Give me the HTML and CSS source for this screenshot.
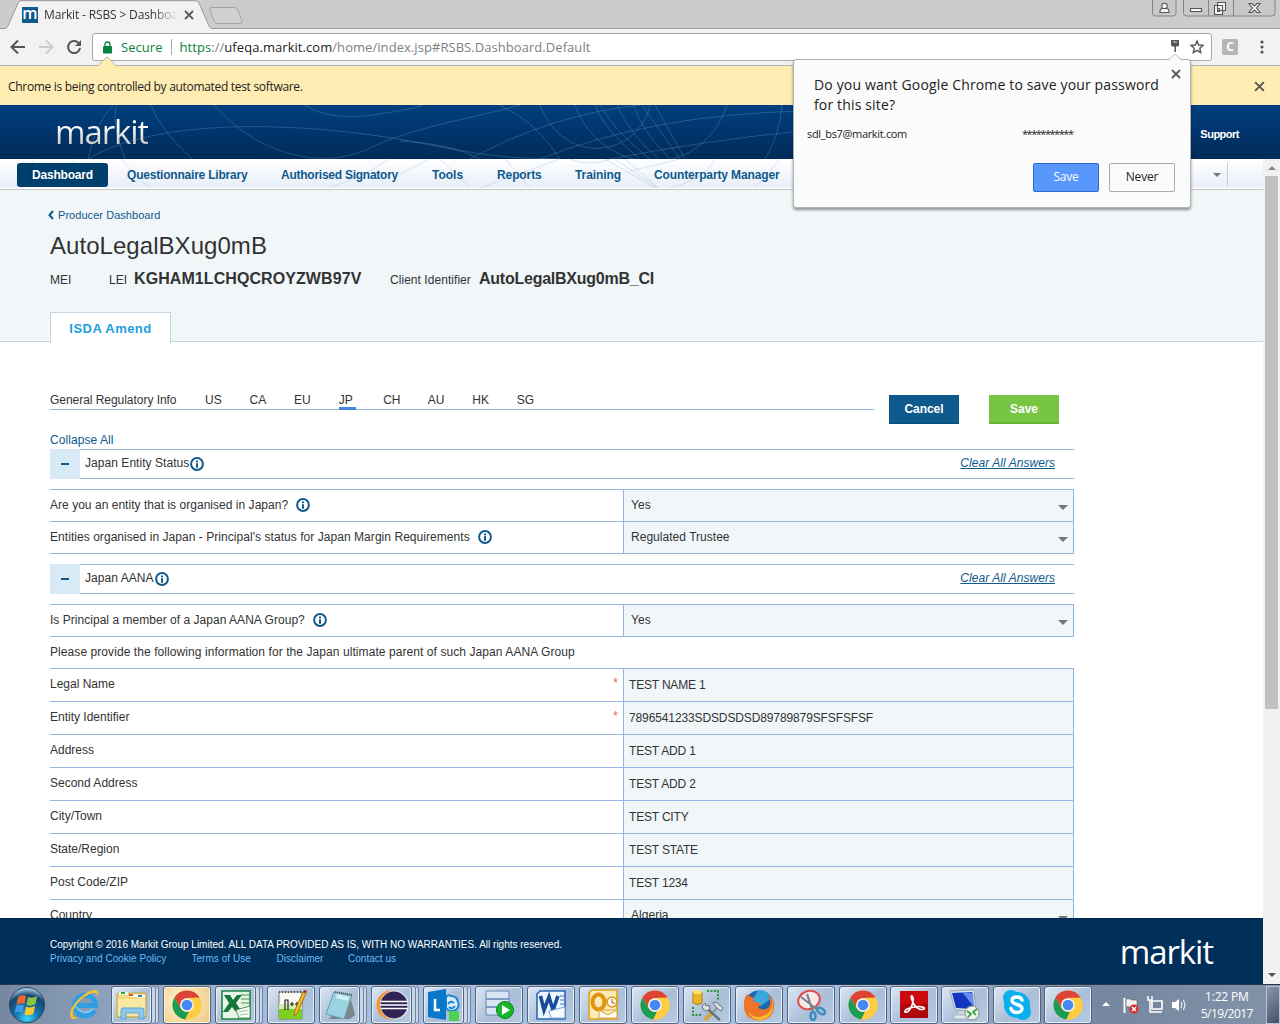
FILE: index.html
```html
<!DOCTYPE html>
<html lang="en">
<head>
<meta charset="utf-8">
<title>Markit - RSBS &gt; Dashboard</title>
<link rel="stylesheet" href="styles.css">
</head>
<body>
<svg class="defs" width="0" height="0">
  <symbol id="info" viewBox="0 0 14 14"><circle cx="7" cy="7" r="5.9" fill="none" stroke="#0f5a8c" stroke-width="2"/><path d="M6 3.4h2v1.8H6zM6 6.2h2v4.6H6z" fill="#0f5a8c"/></symbol>
  <symbol id="close" viewBox="0 0 10 10"><path d="M1 1l8 8M9 1l-8 8" stroke="#5a5a5a" stroke-width="1.800" fill="none"/></symbol>
  <symbol id="chrome" viewBox="0 0 30 30"><circle cx="15" cy="15" r="14.5" fill="#fcc934"/><path d="M2.4 7.7A14.5 14.5 0 0 1 27.6 7.8L15 8.2a6.8 6.8 0 0 0-6 10z" fill="#dc4437"/><path d="M2.4 7.7L8.9 18.4c1.5 2.7 4.5 4 8 3.2L13.2 29.4A14.5 14.5 0 0 1 2.4 7.7z" fill="#1a9b58"/><path d="M27.6 7.8H15a7 7 0 0 1 5.8 10.8L13.5 29.4A14.5 14.5 0 0 0 27.6 7.8z" fill="#ffcd40"/><circle cx="15" cy="15" r="6.8" fill="#f5f5f5"/><circle cx="15" cy="15" r="5.3" fill="#4587f3"/></symbol>
</svg>
<div class="screen">
  <div class="tabstrip">
    <svg class="tabshape" width="250" height="29" viewBox="0 0 250 29"><path d="M0 28.5H5Q7 28 8 26L18 3Q19 .7 21 .7H195Q198 .7 199 3L209 26Q210 28.500 213 28.500H250V29H0z" fill="#f2f2f2"/><path d="M0 28.500H5Q7 28 8 26L18 3Q19 .7 21 .7H195Q198 .7 199 3L209 26Q210 28.500 213 28.500H250" fill="none" stroke="#999"/><path d="M212 7.500H234Q237 7.500 238 10L242 21Q243 23.500 240 23.500H218Q215 23.500 214 21L210 10Q209 7.500 212 7.500z" fill="#d1d1d1" stroke="#a3a3a3"/></svg>
    <div class="tabinfo">
      <span class="favicon">m</span><span class="tabtitle">Markit - RSBS &gt; Dashboa</span><svg class="tabclose" width="10" height="10"><use href="#close"/></svg>
    </div>
    <div class="winctl">
      <svg width="128" height="18" viewBox="0 0 128 18"><g fill="#c8c8c8" stroke="#858585"><path d="M2.500-1V13q0 3 3 3H23q3 0 3-3V-1M33.500-1V13q0 3 3 3H122q3 0 3-3V-1M58.500 0V16M83.500 0V16"/></g><g fill="#f7f7f7" stroke="#555" stroke-width="1.100"><circle cx="14.500" cy="6" r="2.800"/><path d="M10 12.500V11q0-2.500 3-2.500h3q3 0 3 2.500v1.500zM40.500 8.500h11v3h-11zM67.500 2.500h8v8h-8zM64.500 5.500h8v9h-8zM67.500 8.500h2v3h-2zM99 3.500h3l2.500 2.500 2.500-2.500h3L106.500 8l3.500 4.500h-3L104.500 10 102 12.500h-3L102.500 8z"/></g></svg>
    </div>
  </div>
  <div class="toolbar">
    <svg class="navicons" width="84" height="20" viewBox="0 0 84 20" fill="none" stroke-width="2"><path d="M25 10H12M18 3.500L11.500 10l6.500 6.500" stroke="#555"/><path d="M39 10H52M46 3.500l6.500 6.500-6.500 6.500" stroke="#ccc"/><path d="M78.500 6A6 6 0 1 0 80 11" stroke="#555"/><path d="M81 3v6h-6z" fill="#555"/></svg>
    <div class="omnibox">
      <svg width="9" height="13" viewBox="0 0 9 13"><path d="M2 6V3.500a2.500 2.500 0 0 1 5 0V6" fill="none" stroke="#0b8043" stroke-width="1.300"/><rect y="5" width="9" height="7.500" rx="1" fill="#0b8043"/></svg>
      <span class="secure">Secure</span><span class="bar"></span>
      <span class="url"><span class="green">https</span>://<b>ufeqa.markit.com</b>/home/index.jsp#RSBS.Dashboard.Default</span>
      <svg class="omni-right" width="36" height="16" viewBox="0 0 36 16"><path d="M1 1h8v5q0 1.500-2 1.500H6V13H4.500V7.500H3Q1 7.500 1 6z" fill="#555"/><path d="M3 3h4" stroke="#ddd"/><path d="M27 2l1.700 4 4.300.4-3.200 2.900.9 4.200-3.700-2.200-3.700 2.200.9-4.200L21 6.400l4.300-.4z" fill="none" stroke="#555" stroke-width="1.400"/></svg>
    </div>
    <span class="ext">C</span>
    <svg class="dots" width="4" height="16" viewBox="0 0 4 16" fill="#555"><circle cx="2" cy="3" r="1.600"/><circle cx="2" cy="8" r="1.600"/><circle cx="2" cy="13" r="1.600"/></svg>
  </div>
  <div class="infobar"><svg class="notch" width="20" height="11" viewBox="0 0 20 11"><path d="M0 10.500L10 .7l10 9.800" fill="#ffecb3" stroke="#bbb6a5"/></svg><span class="auto">Chrome is being controlled by automated test software.</span><svg width="11" height="11"><use href="#close"/></svg></div>

  <div class="viewport">
    <div class="page">
      <div class="masthead">
        <svg class="arcs" width="1263" height="54" viewBox="0 0 1263 54" fill="none" stroke="#6f9fd0" stroke-opacity=".32"><path d="M113 0Q96 18 88 54M116 0Q112 22 125 54M151 0Q160 25 192 54M214 0C260 52 325 65 370 43S480 12 520 0M88 54C170 5 340 22 420 38S520 53 560 54M305 0Q330 17 380 9T420 0M499 0Q535 15 560 54M540 0C565 65 640 50 650 0M575 0C600 70 700 80 727 0M595 0Q604 25 640 54M600 0Q616 28 650 54M617 0Q630 30 659 54M633 0Q645 30 670 54M642 0L680 54M655 0L685 54M400 36Q450 38 480 54M470 54Q550 10 640 0M540 54Q650 10 800 6M610 54Q710 35 800 26M765 54Q780 30 782 0"/></svg>
        <span class="logo">markit</span><span class="support">Support</span>
      </div>
      <nav class="mainnav">
        <svg class="arcs" width="1263" height="29" viewBox="0 0 1263 29" fill="none" stroke="#9bb4d4" stroke-opacity=".35"><path d="M16 29Q25 12 35 0M72 0L78 8M122 0Q135 18 150 29M330 28Q360 20 389 0M400 15L430 0M440 0L470 29M505 0L530 29M480 29L560 0M570 0Q590 8 610 0M605 0L655 29M615 0L657 29M625 0L658 29M630 12L680 0M670 29Q705 20 715 0M755 29L780 0"/></svg>
        <span class="n on">Dashboard</span><span class="n n2">Questionnaire Library</span><span class="n n3">Authorised Signatory</span><span class="n n4">Tools</span><span class="n n5">Reports</span><span class="n n6">Training</span><span class="n n7">Counterparty Manager</span>
        <span class="more"><i class="tri"></i></span>
      </nav>
      <section class="entity">
        <div class="crumb"><svg width="6" height="10" viewBox="0 0 6 10"><path d="M5 1L1.500 5 5 9" fill="none" stroke="#0f5a8c" stroke-width="2"/></svg><span>Producer Dashboard</span></div>
        <h1><span>AutoLegalBXug0mB</span></h1>
        <div class="ids"><span class="mei">MEI</span><span class="lei">LEI</span><b class="leiv">KGHAM1LCHQCROYZWB97V</b><span class="ci">Client Identifier</span><b class="civ">AutoLegalBXug0mB_CI</b></div>
        <div class="tab"><span>ISDA Amend</span></div>
      </section>
      <main>
        <div class="actions">
          <div class="regions"><span class="gri">General Regulatory Info</span><span class="r">US</span><span class="r">CA</span><span class="r">EU</span><span class="r"><u>JP</u></span><span class="r">CH</span><span class="r">AU</span><span class="r">HK</span><span class="r">SG</span></div>
          <button class="cancel">Cancel</button><button class="save">Save</button>
        </div>
        <div class="collapse"><span>Collapse All</span></div>
        <div class="section"><span class="minus"></span><div class="bar2"><span class="t1">Japan Entity Status</span><svg width="14" height="14"><use href="#info"/></svg><a>Clear All Answers</a></div></div>
        <div class="grid">
          <div class="row"><div class="q"><span class="q1">Are you an entity that is organised in Japan?</span><svg width="14" height="14"><use href="#info"/></svg></div><div class="v sel"><span class="yes">Yes</span><i class="tri"></i></div></div>
          <div class="row"><div class="q"><span class="q2">Entities organised in Japan - Principal's status for Japan Margin Requirements</span><svg width="14" height="14"><use href="#info"/></svg></div><div class="v sel"><span class="rt">Regulated Trustee</span><i class="tri"></i></div></div>
        </div>
        <div class="section"><span class="minus"></span><div class="bar2"><span class="t2">Japan AANA</span><svg width="14" height="14"><use href="#info"/></svg><a>Clear All Answers</a></div></div>
        <div class="grid last">
          <div class="row"><div class="q"><span class="q3">Is Principal a member of a Japan AANA Group?</span><svg width="14" height="14"><use href="#info"/></svg></div><div class="v sel"><span class="yes">Yes</span><i class="tri"></i></div></div>
          <div class="row"><div class="q wide"><span class="q4">Please provide the following information for the Japan ultimate parent of such Japan AANA Group</span></div></div>
          <div class="row f"><div class="q"><span>Legal Name</span><em>*</em></div><div class="v"><span>TEST NAME 1</span></div></div>
          <div class="row f"><div class="q"><span>Entity Identifier</span><em>*</em></div><div class="v"><span class="idv">7896541233SDSDSDSD89789879SFSFSFSF</span></div></div>
          <div class="row f"><div class="q"><span>Address</span></div><div class="v"><span>TEST ADD 1</span></div></div>
          <div class="row f"><div class="q"><span>Second Address</span></div><div class="v"><span>TEST ADD 2</span></div></div>
          <div class="row f"><div class="q"><span>City/Town</span></div><div class="v"><span>TEST CITY</span></div></div>
          <div class="row f"><div class="q"><span>State/Region</span></div><div class="v"><span>TEST STATE</span></div></div>
          <div class="row f"><div class="q"><span>Post Code/ZIP</span></div><div class="v"><span>TEST 1234</span></div></div>
          <div class="row f"><div class="q"><span>Country</span></div><div class="v sel"><span>Algeria</span><i class="tri"></i></div></div>
        </div>
      </main>
      <footer>
        <div><p class="copy"><span>Copyright © 2016 Markit Group Limited. ALL DATA PROVIDED AS IS, WITH NO WARRANTIES. All rights reserved.</span></p>
        <p class="links"><span class="l1">Privacy and Cookie Policy</span><span class="l2">Terms of Use</span><span class="l3">Disclaimer</span><span class="l4">Contact us</span></p></div>
        <span class="logo">markit</span>
      </footer>
    </div>
    <div class="side"><div class="sidetop"></div><div class="scroll"><i class="up"></i><div class="thumb"></div><i class="down"></i></div></div>
  </div>

  <div class="taskbar">
    <svg class="orb" width="38" height="38" viewBox="0 0 38 38"><defs><radialGradient id="og" cx=".5" cy=".9" r=".85"><stop offset="0" stop-color="#35dcff"/><stop offset=".4" stop-color="#1671ac"/><stop offset=".8" stop-color="#164670"/><stop offset="1" stop-color="#9ac0da"/></radialGradient></defs><circle cx="19" cy="19" r="17.500" fill="url(#og)" stroke="#27455e"/><path d="M10 11q4-3 8-1l-1.500 8q-4-2-8 1z" fill="#ee6632"/><path d="M20 11q4 2 9-1l-1.500 8q-5 3-9 1z" fill="#8bc53f"/><path d="M8 20q4-2.500 8-.5L14.500 27q-4-2-8 0z" fill="#3d9ae2"/><path d="M18 20.500q4 2 9-.5l-1.500 7.500q-5 3-9 1z" fill="#fcc72c"/></svg>
    <svg class="ie" width="32" height="32" viewBox="0 0 32 32"><path d="M26.500 21A10.500 10.500 0 1 1 27.500 16.500H9" fill="none" stroke="#2f9fe2" stroke-width="5"/><path d="M25 20A10.500 10.500 0 0 1 8 17" fill="none" stroke="#7fd0f6" stroke-width="1.500"/><path d="M3 29C-2 22 14 2 27 1q5 1 2 7 1-5-4-4C15 6 3 19 5 27q2 3 6 1-5 4-8 1" fill="#f6c32c"/></svg>
    <div class="tasks">
      <div class="task st"><span><svg width="32" height="32" viewBox="0 0 32 32"><path d="M1 6q0-2 2-2h25q2 0 2 2v22H1z" fill="#f0d77c" stroke="#c3a146"/><path d="M3 3h9v3H3zM14 5h8v3h-8zM22 6h7v3h-7z" fill="#fffbe0"/><path d="M5 3h4v2H5z" fill="#1fae3c"/><path d="M13 5h4v2h-4z" fill="#d34f36"/><path d="M22 6h4v2h-4z" fill="#298ade"/><path d="M2 10h27v17H2z" fill="#f9e9a5"/><path d="M5 30V21q0-2 2-2h19q2 0 2 2v9h-5v-6H10v6z" fill="#8dc8e8" stroke="#5aa5d1"/></svg></span><s></s><s></s></div>
      <div class="task active"><span><svg width="30" height="30"><use href="#chrome"/></svg></span></div>
      <div class="task st"><span><svg width="32" height="32" viewBox="0 0 32 32"><path d="M2 2h28v28H2z" fill="#e8f4e5" stroke="#218442" stroke-width="1.600"/><path d="M21 6h8M21 10h8M21 14h8" stroke="#96c59b" stroke-width="2"/><path d="M4 6h6l3 5 4-5h5l-6 8 6 9h-6l-4-5-4 5H3l6-9z" fill="#16773a"/><path d="M16 21l14-4v12H19z" fill="#fafffa" stroke="#459550"/><path d="M19 23l9-2M20 26l8-1" stroke="#96c59b"/></svg></span><s></s><s></s></div>
      <div class="task"><span><svg width="32" height="32" viewBox="0 0 32 32"><path d="M4 3h23v27H4z" fill="#f8f9f2" stroke="#777"/><path d="M4 19h23v11H4z" fill="#7ed01f"/><path d="M4 15h23v5H4z" fill="#d3eeae"/><path d="M4 3h23" stroke="#555" stroke-width="2" stroke-dasharray="1 2"/><path d="M10 21V11h3v10M15 15h4M17 13v4M20 15h4M22 13v4" fill="none" stroke="#222" stroke-width="1.200"/><path d="M19 27l1-6L28 3l3 1-8 19z" fill="#f5b62b" stroke="#a77817"/><path d="M28 3l1-2 3 1-1 2z" fill="#b02727"/></svg></span></div>
      <div class="task st"><span><svg width="32" height="32" viewBox="0 0 32 32"><path d="M26 7l5 19-5 4H5z" fill="#7d878b"/><path d="M10 3l18 3-8 24L2 25z" fill="#9bd2df" stroke="#659daf"/><path d="M13 5l12 3-1 4-12-3z" fill="#d3f2f7"/><path d="M11 3l17 3" stroke="#4e5961" stroke-width="2" stroke-dasharray="1 1"/></svg></span><s></s><s></s></div>
      <div class="task st"><span><svg width="32" height="32" viewBox="0 0 32 32"><circle cx="15" cy="16" r="14.500" fill="#f6952c"/><circle cx="18.500" cy="16" r="14.500" fill="#dfe3ee"/><circle cx="18" cy="16" r="13.500" fill="#302457"/><path d="M5 12.500h27M4 16h28M5 19.500h27" stroke="#fff" stroke-width="1.600"/></svg></span><s></s><s></s></div>
      <div class="task st"><span><svg width="32" height="32" viewBox="0 0 32 32"><path d="M18 8q2-3 5-1 6 0 7 6 2 5-2 8-6 3-10-2z" fill="#d7e9f7" stroke="#1987d2" stroke-width="2"/><path d="M20 15q3-4 6-1M27 17q-3 4-6 1" fill="none" stroke="#1987d2" stroke-width="2"/><path d="M0 3l18-3v31L0 28z" fill="#0878cb"/><path d="M7 10v11h5" fill="none" stroke="#fff" stroke-width="2.500"/><path d="M21 22h10v10H21z" fill="#52d052"/></svg></span><s></s><s></s></div>
      <div class="task"><span><svg width="32" height="32" viewBox="0 0 32 32"><path d="M3 2h23v24H3z" fill="#d7e5f4" stroke="#6287b6"/><path d="M3 10h23M3 18h23" stroke="#6287b6" stroke-width="1.500"/><circle cx="22" cy="21" r="8.500" fill="#18b52a" stroke="#08851a"/><path d="M19 16v10l8-5z" fill="#fff"/></svg></span></div>
      <div class="task"><span><svg width="32" height="32" viewBox="0 0 32 32"><path d="M5 2h25v28H2V5z" fill="#edf4fd" stroke="#2d67b1" stroke-width="1.600"/><path d="M25 7h4M25 11h4M25 15h4" stroke="#93b3da" stroke-width="2"/><path d="M5.500 7l3.500 14 5-13 4 13L23 7" fill="none" stroke="#174b99" stroke-width="3.600"/><path d="M14 22l16-4v11H16z" fill="#f9fcff" stroke="#77a1d3"/></svg></span></div>
      <div class="task"><span><svg width="32" height="32" viewBox="0 0 32 32"><path d="M5 1h25v29H2V4z" fill="#fdeab4" stroke="#e3a21b" stroke-width="1.600"/><ellipse cx="11.500" cy="13" rx="6" ry="7.500" fill="none" stroke="#e19413" stroke-width="4"/><circle cx="25" cy="13" r="5" fill="#fff9e8" stroke="#d99a22" stroke-width="1.600"/><path d="M25 10v4h3" fill="none" stroke="#a76910"/><path d="M12 21h18v8H12zl9 5 9-5" fill="#fffdf7" stroke="#d6a540"/></svg></span></div>
      <div class="task"><span><svg width="30" height="30"><use href="#chrome"/></svg></span></div>
      <div class="task"><span><svg width="32" height="32" viewBox="0 0 32 32"><path d="M2 3v11q5 3 9 0V3z" fill="#e9b62b" stroke="#ac8116"/><ellipse cx="6.500" cy="3" rx="4.500" ry="2" fill="#ffe36e"/><path d="M16 2h11v9M2 18v8h9" fill="none" stroke="#2b952f" stroke-width="2" stroke-dasharray="2 1.500"/><path d="M14 31l8-8" stroke="#d8a536" stroke-width="4"/><path d="M22 23l7-7" stroke="#8a969e" stroke-width="2"/><path d="M14 18l15 13" stroke="#68747c" stroke-width="2.500"/><path d="M11 17l3-3 1 3 3-1 1 4-4 2-3-2zM22 14l3-1 7 6-2 3-4-3z" fill="#dce2e5" stroke="#68747c"/></svg></span></div>
      <div class="task"><span><svg width="32" height="32" viewBox="0 0 32 32"><circle cx="16" cy="16" r="14.500" fill="#1d68aa"/><path d="M15 1q10-1 12 9l-9 7-8-6z" fill="#3aa8dc"/><path d="M4 5q3 4 7 3-2 3 1 5l6 1-3 5q9 4 12-3 1-6-2-10 7 4 6 12-1 13-15 13.500Q0 30 1 15 1 9 4 5z" fill="#ee7428"/><path d="M29 10q2 16-13 18-8 0-11-6 3 9 12 9Q33 29 29 10z" fill="#fbbd2d"/></svg></span></div>
      <div class="task"><span><svg width="32" height="32" viewBox="0 0 32 32"><ellipse cx="14" cy="11" rx="11" ry="9" fill="#f7e8e8" stroke="#df4a50" stroke-width="2" transform="rotate(-20 14 11)"/><path d="M6 8l17 13M12 5l6 18" stroke="#7b858c" stroke-width="2.200"/><ellipse cx="18" cy="27" rx="2.500" ry="4" fill="none" stroke="#3a8ebe" stroke-width="2.500"/><ellipse cx="26" cy="22" rx="4.500" ry="2.500" fill="none" stroke="#3a8ebe" stroke-width="2.500" transform="rotate(35 26 22)"/></svg></span></div>
      <div class="task"><span><svg width="30" height="30"><use href="#chrome"/></svg></span></div>
      <div class="task"><span><svg width="30" height="30" viewBox="0 0 30 30"><path d="M1 1h28v27H1z" fill="#cd0a10"/><path d="M1 14h28v14H1z" fill="#ad080c"/><path d="M6 22c4 2 9-9 8-14-1-4-3-2-1 2 2 7 8 11 12 9 2-2-5-3-9-2-5 0-11 3-10 5z" fill="none" stroke="#fff" stroke-width="1.600"/></svg></span></div>
      <div class="task"><span><svg width="32" height="32" viewBox="0 0 32 32"><path d="M1 2l24-1 2 21-21-1z" fill="#d9e5ed" stroke="#98a6b2"/><path d="M3 4l20-1 2 17-18-1z" fill="#1236bd"/><path d="M13 3l11 1 1 14z" fill="#668de7"/><path d="M10 22h8v4H8z" fill="#cbd6df"/><path d="M5 26h17v4H5z" fill="#e3eaf0" stroke="#a4afb8"/><circle cx="23" cy="24" r="7" fill="#eef2ed" stroke="#8a938b"/><path d="M18 22l4 3-3 3M28 20l-4 3 3 3" fill="none" stroke="#2f9a32" stroke-width="1.600"/></svg></span></div>
      <div class="task"><span><svg width="32" height="32" viewBox="0 0 32 32"><circle cx="16" cy="16" r="13" fill="#09aeee"/><circle cx="10" cy="9" r="8" fill="#09aeee"/><circle cx="22" cy="23" r="8" fill="#09aeee"/><path d="M21 11q-1-3-5-3-5 0-5 3.500c0 5 10 3 10 8 0 3-3 4-5 4q-5 0-6-4" fill="none" stroke="#fff" stroke-width="3.500" stroke-linecap="round"/></svg></span></div>
      <div class="task"><span><svg width="30" height="30"><use href="#chrome"/></svg></span></div>
    </div>
    <svg class="tray" width="90" height="24" viewBox="0 0 90 24"><path d="M2 13l4-4 4 4z" fill="#fff"/><path d="M24.500 5v15" stroke="#fff" stroke-width="2"/><path d="M26 6q4-1 5 1h6v8h-6q-2-2-5-1z" fill="#f2f2f2" stroke="#555" stroke-width=".6"/><circle cx="34" cy="16" r="4.500" fill="#d82d25"/><path d="M32 14l4 4M36 14l-4 4" stroke="#fff" stroke-width="1.500"/><path d="M52 8h10v8H52zM54 19h8" fill="#78879f" stroke="#fff" stroke-width="1.600"/><path d="M48 3v4h4V3M50 7v12h4" fill="none" stroke="#fff" stroke-width="1.500"/><path d="M72 9h3l4-3v12l-4-3h-3z" fill="#fff"/><path d="M81 9q2 3 0 6M83.500 7q3 5 0 10" fill="none" stroke="#fff"/></svg>
    <div class="clock"><span class="time">1:22 PM</span><span class="date">5/19/2017</span></div>
    <div class="peek"></div>
  </div>

  <div class="dialog">
    <svg class="dnotch" width="14" height="8" viewBox="0 0 14 8"><path d="M0 7.500L7 1l7 6.500" fill="#fbfbfb" stroke="#bbb"/></svg>
    <svg class="dclose" width="10" height="10"><use href="#close"/></svg>
    <p class="ask"><span>Do you want Google Chrome to save your password</span><br><span>for this site?</span></p>
    <div class="cred"><span class="mail">sdl_bs7@markit.com</span><span class="stars">***********</span></div>
    <div class="btns"><span class="ok">Save</span><span class="no">Never</span></div>
  </div>
</div>
</body>
</html>
```
FILE: styles.css
```css
* { box-sizing: border-box; }
body { margin: 0; }
p, h1 { margin: 0; font-weight: normal; }
svg { display: block; flex: none; }
.defs { position: absolute; }
.screen { position: relative; width: 1280px; height: 1024px; overflow: hidden; display: flex; flex-direction: column; font: 12px/16px "Liberation Sans", Arial, sans-serif; color: #333; white-space: nowrap; }

/* browser window */
.tabstrip, .toolbar, .infobar, .dialog, .clock { font-family: "Open Sans", "Noto Sans", sans-serif; }
.tabstrip { position: relative; height: 29px; flex: none; background: #ccc; border-bottom: 1px solid #999; display: flex; justify-content: space-between; }
.tabshape { position: absolute; left: 0; top: 0; }
.tabinfo { position: relative; display: flex; align-items: center; padding-left: 22px; height: 30px; }
.favicon { width: 16px; height: 16px; background: #0f5a8c; color: #fff; font: 600 16px/12px "Open Sans", sans-serif; text-align: center; }
.tabtitle { width: 140px; margin-left: 6px; font-size: 12px; letter-spacing: -.15px; color: #333; -webkit-mask-image: linear-gradient(90deg, #000 108px, transparent 134px); mask-image: linear-gradient(90deg, #000 108px, transparent 134px); }
.winctl { margin-right: 2px; }
.toolbar { height: 37px; flex: none; background: #f2f2f2; border-bottom: 1px solid #b6b4b6; display: flex; align-items: center; }
.omnibox { width: 1120px; height: 28px; margin-left: 8px; background: #fff; border: 1px solid #a9a9a9; border-radius: 3px; display: flex; align-items: center; padding-left: 10px; font-size: 13px; }
.secure { margin-left: 9px; color: #0b8043; letter-spacing: .05px; }
.bar { width: 1px; height: 16px; background: #aaa; margin: 0 8px; }
.url { color: #808080; letter-spacing: .055px; }
.url b { font-weight: normal; color: #222; }
.url .green { color: #0b8043; }
.omni-right { margin-left: auto; margin-right: 5px; }
.ext { width: 16px; height: 16px; margin-left: 10px; border-radius: 2px; background: #b5b5b5; color: #fff; font: bold 12px/16px "Open Sans", sans-serif; text-align: center; }
.dots { margin-left: 22px; }
.infobar { position: relative; height: 39px; flex: none; background: #ffecb3; display: flex; align-items: center; justify-content: space-between; padding: 2px 15px 0 8px; font-size: 12px; letter-spacing: -.31px; color: #222; }
.notch { position: absolute; left: 97px; top: -10px; }

/* page */
.viewport { height: 879px; flex: none; display: flex; }
.page { width: 1263px; display: flex; flex-direction: column; background: #fff; }
.masthead { position: relative; height: 54px; flex: none; display: flex; align-items: center; justify-content: space-between; padding: 0 24px 0 55px; background: linear-gradient(#003f80, #002b58); }
.arcs { position: absolute; left: 0; top: 0; }
.logo { position: relative; font: 33px/36px "Open Sans", sans-serif; letter-spacing: -1.1px; color: #fff; }
.masthead .logo { background: linear-gradient(#fff 35%, #ccc 80%); -webkit-background-clip: text; background-clip: text; color: transparent; }
.support { position: relative; top: 2px; font-weight: bold; font-size: 11px; letter-spacing: -.5px; color: #fff; }
.mainnav { position: relative; height: 31px; flex: none; display: flex; align-items: center; padding-top: 1px; background: linear-gradient(#fff, #e8eff8 28px, #fff 29px); border-bottom: 1px solid #c9c6c6; font-weight: bold; color: #0f5a8c; }
.n { position: relative; line-height: 24px; }
.n.on { margin-left: 17px; width: 91px; text-align: center; background: #003f6b; color: #fff; border-radius: 3px; letter-spacing: -.2px; }
.n2 { margin-left: 19px; width: 154px; letter-spacing: -.2px; }
.n3 { width: 151px; letter-spacing: -.25px; }
.n4 { width: 65px; }
.n5 { width: 78px; letter-spacing: -.1px; }
.n6 { width: 79px; letter-spacing: -.1px; }
.n7 { letter-spacing: -.12px; }
.more { margin-left: auto; margin-right: 35px; width: 15px; height: 24px; border-right: 1px solid #c5ccd2; display: flex; align-items: center; }
.tri { width: 0; height: 0; border: 5px solid transparent; border-top: 5px solid #777; border-bottom: 0; }
.more .tri { border-width: 4px 4px 0; }
.entity { height: 152px; flex: none; background: #f1f6f9; border-bottom: 1px solid #c2d5e0; padding: 17px 0 0 50px; }
.crumb { display: flex; align-items: center; height: 16px; margin-left: -2px; gap: 4px; color: #0f5a8c; font-size: 11px; letter-spacing: .05px; }
h1 { font-size: 24px; line-height: 30px; margin-top: 8px; color: #333; letter-spacing: .05px; }
.ids { display: flex; align-items: center; height: 20px; margin-top: 8px; font-size: 12px; }
.ids > span { padding-top: 1px; }
.mei { width: 59px; } .lei { width: 25px; }
.ids b { font-size: 16px; }
.leiv { width: 256px; letter-spacing: .08px; }
.ci { width: 89px; letter-spacing: .05px; }
.civ { letter-spacing: -.24px; }
.tab { width: 121px; height: 31px; margin: 23px 0 0; background: #fff; border: 1px solid #c2d5e0; border-bottom: 0; text-align: center; font-weight: bold; font-size: 13px; line-height: 31px; letter-spacing: .45px; color: #209fe0; }
main { height: 576px; flex: none; overflow: hidden; padding: 50px 0 0 50px; width: 1074px; }
.actions { display: flex; height: 40px; }
.regions { width: 824px; flex: none; height: 18px; border-bottom: 1px solid #93b7e2; display: flex; }
.gri { width: 155px; letter-spacing: -.04px; }
.r { width: 44.550px; }
.regions u { display: block; width: 17px; height: 18px; text-decoration: none; border-bottom: 3px solid #4487dd; }
button { border: 0; width: 70px; height: 29px; flex: none; margin: 3px 0 0 15px; padding: 0 0 1px; font: bold 12px "Liberation Sans", Arial, sans-serif; color: #fff; letter-spacing: -.05px; }
.cancel { background: #0f5a8c; border-bottom: 1px solid #0b4c7b; }
.save { background: #78c443; margin-left: 30px; border-bottom: 2px solid #68b534; padding: 0; }
.collapse { height: 17px; color: #0f5a8c; letter-spacing: .07px; }
.section { height: 30px; display: flex; }
.minus { width: 30px; background: #d8eaf6; display: flex; align-items: center; justify-content: center; }
.minus::before { content: ""; width: 8px; height: 2px; background: #0f5a8c; }
.bar2 { flex: 1; display: flex; align-items: center; gap: 1px; border: solid #93b7e2; border-width: 1px 0; padding: 0 19px 0 5px; }
.bar2 span, .bar2 a { margin-top: -2px; letter-spacing: .05px; }
.bar2 a { margin-left: auto; font-style: italic; text-decoration: underline; color: #0f5a8c; }
.grid { margin: 10px 0; border-bottom: 1px solid #93b7e2; }
.row { height: 32px; border-top: 1px solid #93b7e2; display: flex; }
.row.f { height: 33px; }
.q { width: 573px; display: flex; align-items: center; gap: 8px; }
.q span, .sel span { margin-top: -2px; }
.q svg { margin-top: -1px; }
.q1, .q3 { letter-spacing: .03px; }
.q2 { letter-spacing: .05px; }
.q4 { letter-spacing: .075px; }
.q.wide { width: auto; }
.q em { margin: -4px 5px 0 auto; font-style: normal; color: #e0694f; }
.v { flex: 1; display: flex; align-items: center; padding: 0 6px 1px 5px; background: #f1f6f9; border: solid #93b7e2; border-width: 0 1px; letter-spacing: -.18px; }
.idv { letter-spacing: -.12px; }
.sel { padding: 0 5px 0 7px; justify-content: space-between; letter-spacing: .03px; }
.sel .tri { margin-top: 4px; }
footer { height: 66px; flex: none; background: #002f59; display: flex; justify-content: space-between; padding: 19px 50px 0 50px; font-size: 10px; line-height: 14px; color: #fff; border-top: 1px solid #00274b; }
.links { display: flex; color: #6cbcf5; letter-spacing: .03px; }
.l1 { width: 141.500px; } .l2 { width: 85px; } .l3 { width: 71.500px; }
footer .logo { top: -4px; }
.side { width: 17px; display: flex; flex-direction: column; }
.sidetop { height: 54px; background: linear-gradient(#003f80, #002b58); }
.scroll { flex: 1; background: #f1f1f1; display: flex; flex-direction: column; align-items: center; }
.up { margin-top: 7px; width: 0; height: 0; border: 4px solid transparent; border-bottom-color: #888; border-top: 0; }
.thumb { width: 13px; height: 533px; margin-top: 6px; background: #c1c1c1; }
.down { margin-top: auto; margin-bottom: 7px; border: 4px solid transparent; border-top-color: #505050; border-bottom: 0; }

/* taskbar */
.taskbar { height: 40px; flex: none; background: linear-gradient(90deg, #7687a0, #8ba0bd 8%, #a5bfdf 22%, #a4bedd 70%, #7587a0 86%, #8192a9); border-top: 1px solid #26364c; display: flex; align-items: center; }
.orb { margin-left: 8px; }
.ie { margin-left: 22px; }
.tasks { margin-left: 11px; display: flex; gap: 4px; height: 38px; }
.task { width: 48px; display: flex; }
.task:nth-child(n+16) { margin-left: -.8px; }
.task span { flex: 1; display: flex; align-items: center; justify-content: center; border: 1px solid #53657d; border-radius: 3px; background: linear-gradient(135deg, #dce7f4, #aabed8 55%, #b7cae2); box-shadow: inset 0 0 0 1px #e4edf7; }
.task s { width: 3.500px; margin: 0; border: 1px solid #71849e; border-left: 0; border-radius: 0 3px 3px 0; background: #c6d5e8; }
.task.active span { background: radial-gradient(circle at 40% 40%, #fff6e0, #f4d9a0 60%, #edc983); box-shadow: inset 0 0 0 1px #fff4d6; }
.tray { margin-left: 8px; }
.clock { width: 64px; margin-left: 5px; display: flex; flex-direction: column; align-items: center; font-size: 12px; line-height: 17px; letter-spacing: -.2px; color: #fff; }
.date { letter-spacing: -.5px; }
.peek { margin-left: auto; width: 14px; height: 38px; border: 1px solid #b7c3d3; background: linear-gradient(135deg, #8997aa, #435268); }

/* save-password bubble */
.dialog { position: absolute; left: 793px; top: 59px; width: 398px; height: 149px; background: #fbfbfb; border: 1px solid #b2b2b2; border-radius: 3px; box-shadow: 0 2px 3px rgba(0,0,0,.4); padding: 15px 15px 0 13px; color: #222; }
.dnotch { position: absolute; left: 374px; top: -7px; }
.dclose { position: absolute; left: 377px; top: 9px; }
.ask { padding-left: 7px; font-size: 14px; line-height: 20px; letter-spacing: .15px; }
.cred { display: flex; margin-top: 11px; font-size: 11px; line-height: 16px; }
.mail { width: 215px; letter-spacing: -.33px; }
.stars { letter-spacing: -1.47px; }
.btns { display: flex; justify-content: flex-end; gap: 10px; margin-top: 21px; }
.btns span { width: 66px; height: 29px; line-height: 26px; text-align: center; border: 1px solid #aaa; border-radius: 2px; letter-spacing: -.2px; }
.btns .ok { background: #5897fb; border-color: #2a68cd; color: #fff; }
```
